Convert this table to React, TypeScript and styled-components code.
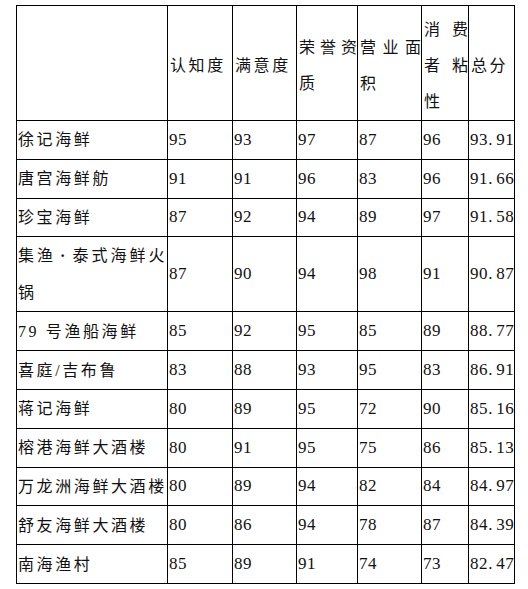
import React from "react";
import styled, { createGlobalStyle } from "styled-components";

const Global = createGlobalStyle`
  html, body { margin: 0; padding: 0; background: #ffffff; }
  body { font-family: "Liberation Serif", "Noto Sans CJK SC", serif; color: #000; }
`;

const Page = styled.div`
  padding: 5px 0 0 16px;
`;

const Table = styled.table`
  border-collapse: collapse;
  table-layout: fixed;
  width: 499px;
`;

const HeadRow = styled.tr`
  height: 113px;
`;

const BodyRow = styled.tr`
  height: 38.8px;
`;

const Cell = styled.td`
  border: 1px solid #000;
  padding: 0 0 0 1px;
  vertical-align: middle;
  text-align: justify;
  color: #111;
`;

const HeadCell = styled(Cell)<{ $tight?: boolean }>`
  font-family: "Liberation Serif", "Noto Sans CJK SC", serif;
  font-size: 16px;
  letter-spacing: ${(p) => (p.$tight ? "0px" : "2.6px")};
  line-height: 36px;
  padding: 6px 0 0 2px;
  font-weight: 400;
`;

const NameCell = styled(Cell)`
  font-size: 16px;
  letter-spacing: 2.6px;
  line-height: 37px;
`;

const NameDot = styled.span`
  display: inline-block;
  width: 16px;
  text-align: center;
  font-weight: 700;
`;

const NumCell = styled(Cell)`
  font-size: 17px;
  letter-spacing: 0.6px;
  white-space: nowrap;
  line-height: 20px;
`;

const Dot = styled.span`
  display: inline-block;
  width: 8px;
`;

type Row = [string, number, number, number, number, number, string];

const rows: Row[] = [
  ["徐记海鲜", 95, 93, 97, 87, 96, "93.91"],
  ["唐宫海鲜舫", 91, 91, 96, 83, 96, "91.66"],
  ["珍宝海鲜", 87, 92, 94, 89, 97, "91.58"],
  ["集渔·泰式海鲜火锅", 87, 90, 94, 98, 91, "90.87"],
  ["79 号渔船海鲜", 85, 92, 95, 85, 89, "88.77"],
  ["喜庭/吉布鲁", 83, 88, 93, 95, 83, "86.91"],
  ["蒋记海鲜", 80, 89, 95, 72, 90, "85.16"],
  ["榕港海鲜大酒楼", 80, 91, 95, 75, 86, "85.13"],
  ["万龙洲海鲜大酒楼", 80, 89, 94, 82, 84, "84.97"],
  ["舒友海鲜大酒楼", 80, 86, 94, 78, 87, "84.39"],
  ["南海渔村", 85, 89, 91, 74, 73, "82.47"],
];

const colWidths = [151, 65, 64, 61, 64, 47, 46];

function Name({ text }: { text: string }) {
  const parts = text.split("·");
  return (
    <>
      {parts.map((p, i) => (
        <React.Fragment key={i}>
          {i > 0 && <NameDot>·</NameDot>}
          {p}
        </React.Fragment>
      ))}
    </>
  );
}

function Total({ value }: { value: string }) {
  const [a, b] = value.split(".");
  return (
    <>
      {a}
      <Dot>.</Dot>
      {b}
    </>
  );
}

export default function App() {
  return (
    <Page>
      <Global />
      <Table>
        <colgroup>
          {colWidths.map((w, i) => (
            <col key={i} style={{ width: w }} />
          ))}
        </colgroup>
        <thead>
          <HeadRow>
            <HeadCell as="th"></HeadCell>
            <HeadCell as="th">认知度</HeadCell>
            <HeadCell as="th">满意度</HeadCell>
            <HeadCell as="th" $tight>荣誉资质</HeadCell>
            <HeadCell as="th" $tight>营业面积</HeadCell>
            <HeadCell as="th" $tight>消费者粘性</HeadCell>
            <HeadCell as="th">总分</HeadCell>
          </HeadRow>
        </thead>
        <tbody>
          {rows.map((r) => (
            <BodyRow key={r[0]}>
              <NameCell>
                <Name text={r[0]} />
              </NameCell>
              <NumCell>{r[1]}</NumCell>
              <NumCell>{r[2]}</NumCell>
              <NumCell>{r[3]}</NumCell>
              <NumCell>{r[4]}</NumCell>
              <NumCell>{r[5]}</NumCell>
              <NumCell>
                <Total value={r[6]} />
              </NumCell>
            </BodyRow>
          ))}
        </tbody>
      </Table>
    </Page>
  );
}
